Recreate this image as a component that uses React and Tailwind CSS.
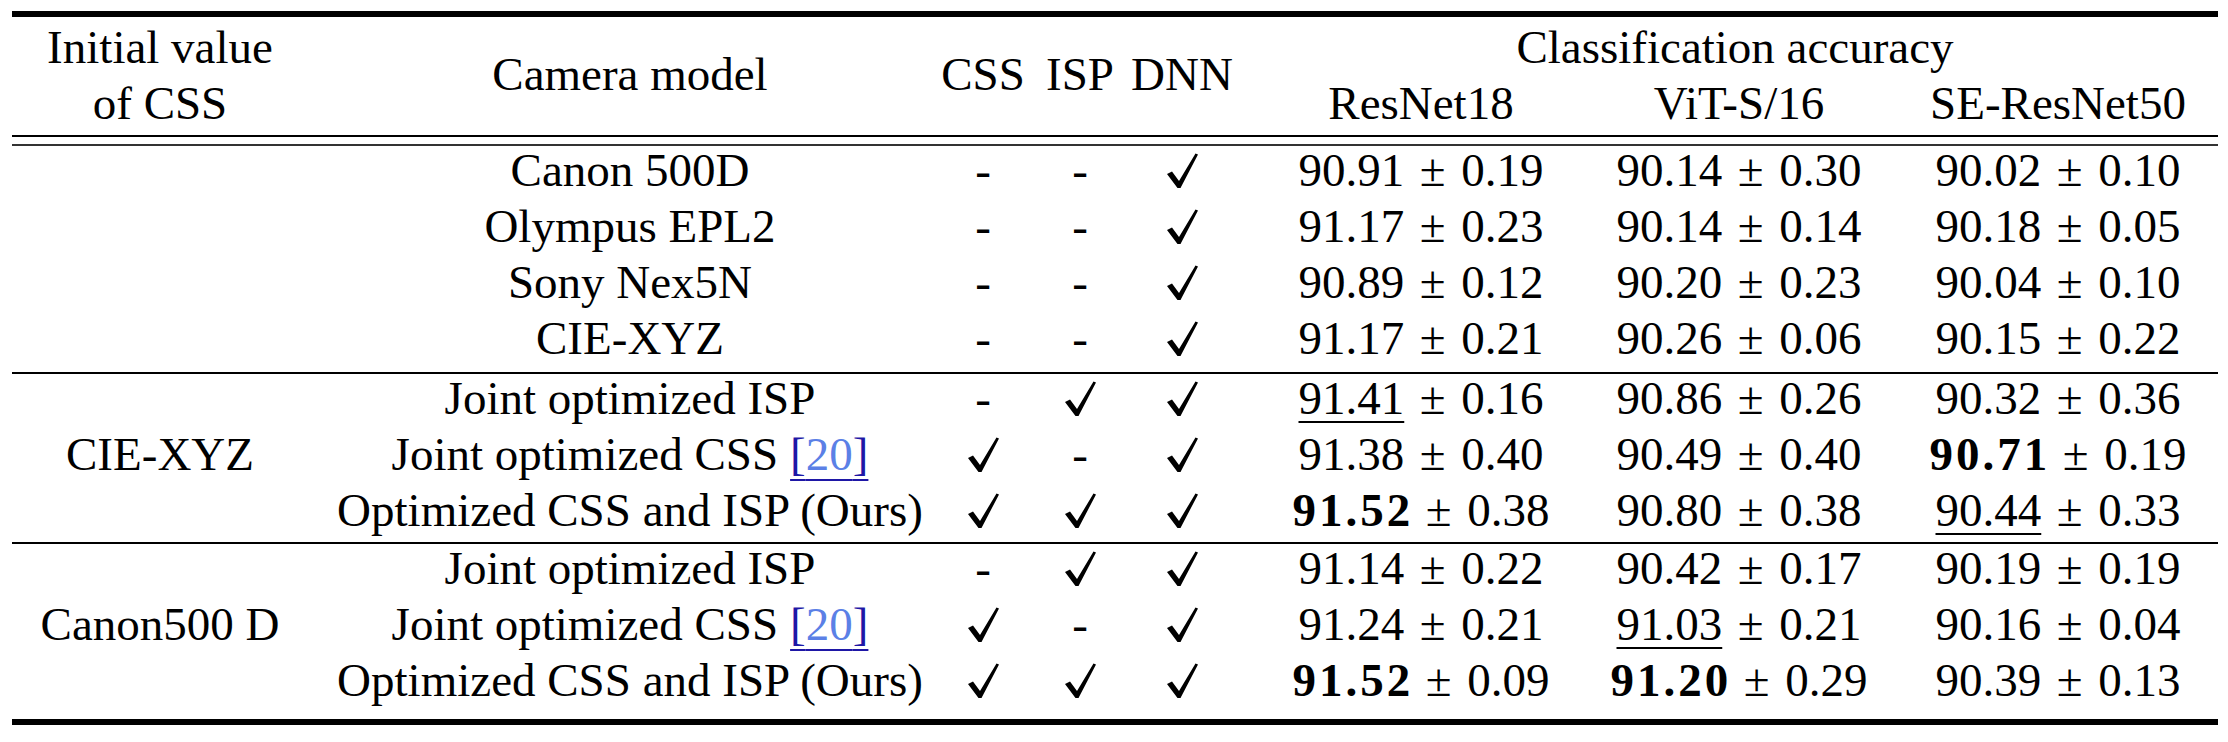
import React from "react";

const rows = [
  {
    label: "",
    items: [
      ["Canon 500D", "-", "-", "y", ["90.91", "0.19"], ["90.14", "0.30"], ["90.02", "0.10"]],
      ["Olympus EPL2", "-", "-", "y", ["91.17", "0.23"], ["90.14", "0.14"], ["90.18", "0.05"]],
      ["Sony Nex5N", "-", "-", "y", ["90.89", "0.12"], ["90.20", "0.23"], ["90.04", "0.10"]],
      ["CIE-XYZ", "-", "-", "y", ["91.17", "0.21"], ["90.26", "0.06"], ["90.15", "0.22"]],
    ],
    gap: "pb-[2px]",
  },
  {
    label: "CIE-XYZ",
    items: [
      ["Joint optimized ISP", "-", "y", "y", ["91.41", "0.16", "u"], ["90.86", "0.26"], ["90.32", "0.36"]],
      ["Joint optimized CSS", "y", "-", "y", ["91.38", "0.40"], ["90.49", "0.40"], ["90.71", "0.19", "b"]],
      ["Optimized CSS and ISP (Ours)", "y", "y", "y", ["91.52", "0.38", "b"], ["90.80", "0.38"], ["90.44", "0.33", "u"]],
    ],
    gap: "pb-0",
  },
  {
    label: "Canon500 D",
    items: [
      ["Joint optimized ISP", "-", "y", "y", ["91.14", "0.22"], ["90.42", "0.17"], ["90.19", "0.19"]],
      ["Joint optimized CSS", "y", "-", "y", ["91.24", "0.21"], ["91.03", "0.21", "u"], ["90.16", "0.04"]],
      ["Optimized CSS and ISP (Ours)", "y", "y", "y", ["91.52", "0.09", "b"], ["91.20", "0.29", "b"], ["90.39", "0.13"]],
    ],
    gap: "pb-[7px]",
  },
];

const cell = "flex justify-center whitespace-nowrap h-[56px] leading-[48px] pb-[8px]";

function Check() {
  return (
    <svg width="31" height="35" viewBox="0 0 31 35" className="mt-[7px] self-start">
      <path d="M0 21 L5 18.5 L12 28 L28.5 0.5 L31 1.5 L13.5 35 L10.5 35 Z" fill="black" />
    </svg>
  );
}

function Mark({ v }) {
  if (v === "y") return <Check />;
  return <span>-</span>;
}

function Num({ v }) {
  const [a, b, s] = v;
  let main = <span>{a}</span>;
  if (s === "b") main = <span className="font-bold tracking-[3px] mr-[-3px]">{a}</span>;
  if (s === "u")
    main = (
      <span className="underline decoration-[2px] underline-offset-[7px]">{a}</span>
    );
  return (
    <span>
      {main}
      <span className="inline-block w-[37px] mx-[10px] text-center">±</span>
      <span>{b}</span>
    </span>
  );
}

function Ref() {
  return (
    <span className="ml-[12px] underline decoration-[#1e17a6] decoration-[2px] underline-offset-[9px]">
      <span className="text-[#1e17a6]">[</span>
      <span className="text-[#5b80e6]">20</span>
      <span className="text-[#1e17a6]">]</span>
    </span>
  );
}

export default function App() {
  const cols = "grid grid-cols-[296px_644px_62px_132px_72px_362px_318px_320px]";
  return (
    <div
      className="bg-white w-[2228px] h-[742px] pt-[11px] pl-[12px] text-black text-[47px]"
      style={{ fontFamily: '"Liberation Serif", "Times New Roman", serif' }}
    >
      <div className="w-[2206px]">
        <div className="h-[6px] bg-black" />
        <div className={cols + " grid-rows-[56px_56px] pt-[6px]"}>
          <div className={cell}>Initial value</div>
          <div className="row-span-2 flex justify-center items-center leading-[48px] pb-[11px]">Camera model</div>
          <div className="row-span-2 flex justify-center items-center leading-[48px] pb-[11px]">CSS</div>
          <div className="row-span-2 flex justify-center items-center leading-[48px] pb-[11px]">ISP</div>
          <div className="row-span-2 flex justify-center items-center leading-[48px] pb-[11px]">DNN</div>
          <div className={cell + " col-span-3 pl-[34px]"}>Classification accuracy</div>
          <div className={cell}>of CSS</div>
          <div className={cell + " pl-[44px]"}>ResNet18</div>
          <div className={cell}>ViT-S/16</div>
          <div className={cell}>SE-ResNet50</div>
        </div>
        <div className="h-[2px] bg-black" />
        <div className="h-[7px]" />
        <div className="h-[2px] bg-[#333]" />
        {rows.map((g, gi) => (
          <div key={gi}>
            <div className={g.gap}>
              {g.items.map((r, ri) => (
                <div key={ri} className={cols}>
                  <div className={cell}>{ri === 1 ? g.label : ""}</div>
                  <div className={cell}>
                    {r[0]}
                    {r[0] === "Joint optimized CSS" && <Ref />}
                  </div>
                  <div className={cell}><Mark v={r[1]} /></div>
                  <div className={cell}><Mark v={r[2]} /></div>
                  <div className={cell}><Mark v={r[3]} /></div>
                  <div className={cell + " pl-[44px]"}><Num v={r[4]} /></div>
                  <div className={cell}><Num v={r[5]} /></div>
                  <div className={cell}><Num v={r[6]} /></div>
                </div>
              ))}
            </div>
            {gi < rows.length - 1 ? (
              <div className="h-[2px] bg-black" />
            ) : (
              <div className="h-[6px] bg-black" />
            )}
          </div>
        ))}
      </div>
    </div>
  );
}
